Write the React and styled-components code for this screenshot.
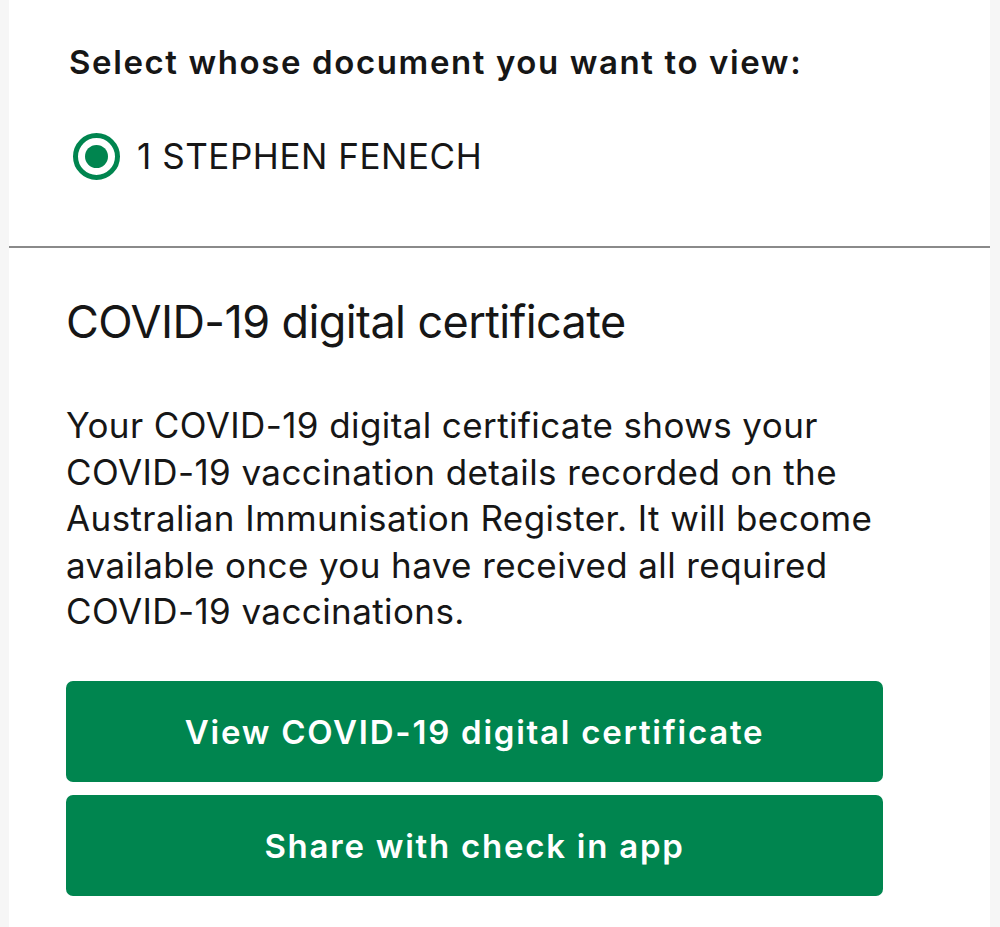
import React, { useState } from "react";
import styled, { createGlobalStyle } from "styled-components";

const GlobalStyle = createGlobalStyle`
  * { box-sizing: border-box; }
  html, body {
    margin: 0;
    padding: 0;
    background: #f6f6f6;
    font-family: "Inter", "Liberation Sans", Arial, sans-serif;
    color: #161616;
  }
`;

const Page = styled.div`
  width: 981px;
  min-height: 927px;
  margin-left: 9px;
  background: #ffffff;
  display: flex;
  flex-direction: column;
`;

const SelectSection = styled.section`
  padding: 42px 0 66px 60px;
`;

const Prompt = styled.h2`
  margin: 0;
  font-size: 33px;
  line-height: 40px;
  font-weight: 600;
  letter-spacing: 1.6px;
`;

const PersonOption = styled.label`
  margin-top: 50px;
  height: 48px;
  display: flex;
  align-items: center;
  gap: 17px;
  cursor: pointer;
`;

const RadioRing = styled.span`
  width: 47px;
  height: 47px;
  border-radius: 50%;
  border: 5px solid #00854f;
  display: flex;
  align-items: center;
  justify-content: center;
  margin-left: 4px;

  &::after {
    content: "";
    width: 23px;
    height: 23px;
    border-radius: 50%;
    background: ${(p) => (p.$checked ? "#00854f" : "transparent")};
  }
`;

const PersonName = styled.span`
  font-size: 35px;
  font-weight: 400;
  letter-spacing: 0.55px;
`;

const Divider = styled.hr`
  margin: 0;
  border: none;
  height: 2px;
  background: #8a8a8a;
`;

const CertificateSection = styled.section`
  padding: 47px 0 32px 57px;
  width: 900px;
`;

const Title = styled.h1`
  margin: 0;
  font-size: 45px;
  line-height: 54px;
  font-weight: 400;
  letter-spacing: -0.6px;
`;

const Description = styled.p`
  margin: 53px 0 0;
  font-size: 35px;
  line-height: 46.5px;
  letter-spacing: 0.4px;
  white-space: nowrap;
`;

const Actions = styled.div`
  margin-top: 46px;
  width: 817px;
  display: flex;
  flex-direction: column;
  gap: 13px;
`;

const ActionButton = styled.button`
  height: 101px;
  border: none;
  border-radius: 7px;
  background: #00854f;
  color: #ffffff;
  font-family: inherit;
  font-size: 33px;
  font-weight: 600;
  letter-spacing: 1.75px;
  padding-top: 3px;
  cursor: pointer;
`;

export default function App() {
  const [selected, setSelected] = useState(true);

  return (
    <>
      <GlobalStyle />
      <Page>
        <SelectSection>
          <Prompt>Select whose document you want to view:</Prompt>
          <PersonOption onClick={() => setSelected(true)}>
            <RadioRing $checked={selected} />
            <PersonName>1 STEPHEN FENECH</PersonName>
          </PersonOption>
        </SelectSection>
        <Divider />
        <CertificateSection>
          <Title>COVID-19 digital certificate</Title>
          <Description>
            Your COVID-19 digital certificate shows your
            <br />
            COVID-19 vaccination details recorded on the
            <br />
            Australian Immunisation Register. It will become
            <br />
            available once you have received all required
            <br />
            COVID-19 vaccinations.
          </Description>
          <Actions>
            <ActionButton>View COVID-19 digital certificate</ActionButton>
            <ActionButton>Share with check in app</ActionButton>
          </Actions>
        </CertificateSection>
      </Page>
    </>
  );
}
